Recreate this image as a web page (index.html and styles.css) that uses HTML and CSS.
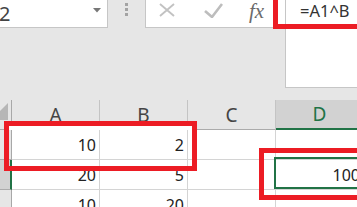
FILE: index.html
```html
<!DOCTYPE html>
<html>
<head>
<meta charset="utf-8">
<link rel="stylesheet" href="styles.css">
</head>
<body>
<div class="app">
  <div class="toolbar">
    <div class="namebox">
      <span class="nb-text">2</span>
      <svg class="nb-arrow" width="8" height="5" viewBox="0 0 8 5"><polygon points="0,0 8,0 4,4.5" fill="#777"/></svg>
    </div>
    <div class="grip"><i></i><i></i><i></i></div>
    <div class="fbtns">
      <svg class="ic-x" width="16" height="14" viewBox="0 0 16 14"><path d="M1,1 L15,13 M15,1 L1,13" stroke="#c2c2c2" stroke-width="1.9" fill="none"/></svg>
      <svg class="ic-ok" width="19" height="15" viewBox="0 0 19 15"><path d="M1,8 L8,14 L18,1" stroke="#bdbdbd" stroke-width="2.6" fill="none"/></svg>
      <span class="fx">fx</span>
    </div>
    <div class="fbar"><span class="ftext">=A1^B</span></div>
  </div>
  <div class="sheet">
    <div class="hd corner"><svg width="11" height="29" viewBox="0 0 11 29"><polygon points="8,3 8,20 -9,20" fill="#b6b6b6"/></svg></div>
    <div class="hd col">A</div>
    <div class="hd col">B</div>
    <div class="hd col">C</div>
    <div class="hd col sel">D</div>

    <div class="hd row"></div>
    <div class="cell">10</div>
    <div class="cell">2</div>
    <div class="cell"></div>
    <div class="cell"></div>

    <div class="hd row sel"></div>
    <div class="cell">20</div>
    <div class="cell">5</div>
    <div class="cell"></div>
    <div class="cell active">100</div>

    <div class="hd row"></div>
    <div class="cell">10</div>
    <div class="cell">20</div>
    <div class="cell"></div>
    <div class="cell"></div>
  </div>
  <div class="mark mark-fbar"></div>
  <div class="mark mark-ab"></div>
  <div class="mark mark-d"></div>
</div>
</body>
</html>
```
FILE: styles.css
```css
html, body {
  margin: 0;
  padding: 0;
}
body {
  width: 357px;
  height: 207px;
  overflow: hidden;
  font-family: "Noto Sans", "Liberation Sans", sans-serif;
}
.app {
  position: relative;
  width: 357px;
  height: 207px;
  overflow: hidden;
  background: #e6e6e6;
}
.toolbar {
  display: flex;
  align-items: flex-start;
  height: 100px;
  background: #e6e6e6;
}
.namebox {
  box-sizing: border-box;
  flex: none;
  width: 108px;
  height: 28px;
  background: #fff;
  border-right: 1px solid #c6c6c6;
  border-bottom: 1px solid #c6c6c6;
  display: flex;
  align-items: center;
}
.nb-text {
  font-size: 20px;
  line-height: 26px;
  color: #444;
  margin-left: -1px;
}
.nb-arrow {
  margin-left: auto;
  margin-right: 6px;
  margin-top: -6px;
}
.grip {
  flex: none;
  display: flex;
  flex-direction: column;
  gap: 2px;
  margin-left: 17px;
  padding-top: 3px;
}
.grip i {
  display: block;
  width: 3px;
  height: 3px;
  background: #a3a3a3;
}
.fbtns {
  box-sizing: border-box;
  flex: none;
  width: 140px;
  height: 28px;
  margin-left: 17px;
  background: #fff;
  border-left: 1px solid #c6c6c6;
  border-bottom: 1px solid #c6c6c6;
  display: flex;
  align-items: flex-start;
  padding-top: 3px;
}
.ic-x {
  margin-left: 13px;
}
.ic-ok {
  margin-left: 29px;
}
.fx {
  margin-left: 26px;
  margin-top: -5px;
  font-family: "Liberation Serif", serif;
  font-style: italic;
  font-size: 21px;
  line-height: 26px;
  color: #6b6b6b;
}
.fbar {
  box-sizing: border-box;
  flex: 1;
  height: 88px;
  background: #fff;
  border-left: 1px solid #c6c6c6;
  border-bottom: 1px solid #c6c6c6;
  padding-left: 14px;
}
.ftext {
  font-size: 16.5px;
  line-height: 20px;
  color: #333;
}
.sheet {
  display: grid;
  grid-template-columns: 12px 88px 88px 88px 88px;
  grid-template-rows: 30px 30px 30px 30px;
  background: #fff;
}
.hd, .cell {
  box-sizing: border-box;
  border-right: 1px solid #d4d4d4;
  border-bottom: 1px solid #d4d4d4;
}
.hd {
  background: #e6e6e6;
}
.corner {
  border-right-color: #a8a8a8;
  border-bottom-color: #ababab;
}
.corner svg {
  display: block;
}
.col {
  border-right-color: #c4c4c4;
  border-bottom-color: #ababab;
  font-size: 19px;
  color: #444;
  display: flex;
  align-items: center;
  justify-content: center;
}
.col.sel {
  background: #d2d2d2;
  color: #217346;
  border-bottom: 2px solid #217346;
}
.row {
  border-right-color: #a8a8a8;
  border-bottom-color: #ababab;
}
.row.sel {
  background: #d2d2d2;
  border-right: 2px solid #217346;
}
.cell {
  background: #fff;
  font-size: 16px;
  color: #222;
  display: flex;
  align-items: center;
  justify-content: flex-end;
  padding-right: 3px;
}
.cell.active {
  position: relative;
}
.cell.active::after {
  content: "";
  position: absolute;
  top: -3px;
  left: -2px;
  right: -2px;
  bottom: 0;
  border: 2px solid #217346;
}
.mark {
  position: absolute;
  box-sizing: border-box;
  border: 5px solid #ec1c24;
}
.mark-fbar {
  left: 273px;
  top: -10px;
  width: 120px;
  height: 39px;
}
.mark-ab {
  left: 4px;
  top: 121px;
  width: 193px;
  height: 50px;
  box-shadow: inset 0 4px 0 #fff;
}
.mark-d {
  left: 259px;
  top: 148px;
  width: 120px;
  height: 52px;
}
```
